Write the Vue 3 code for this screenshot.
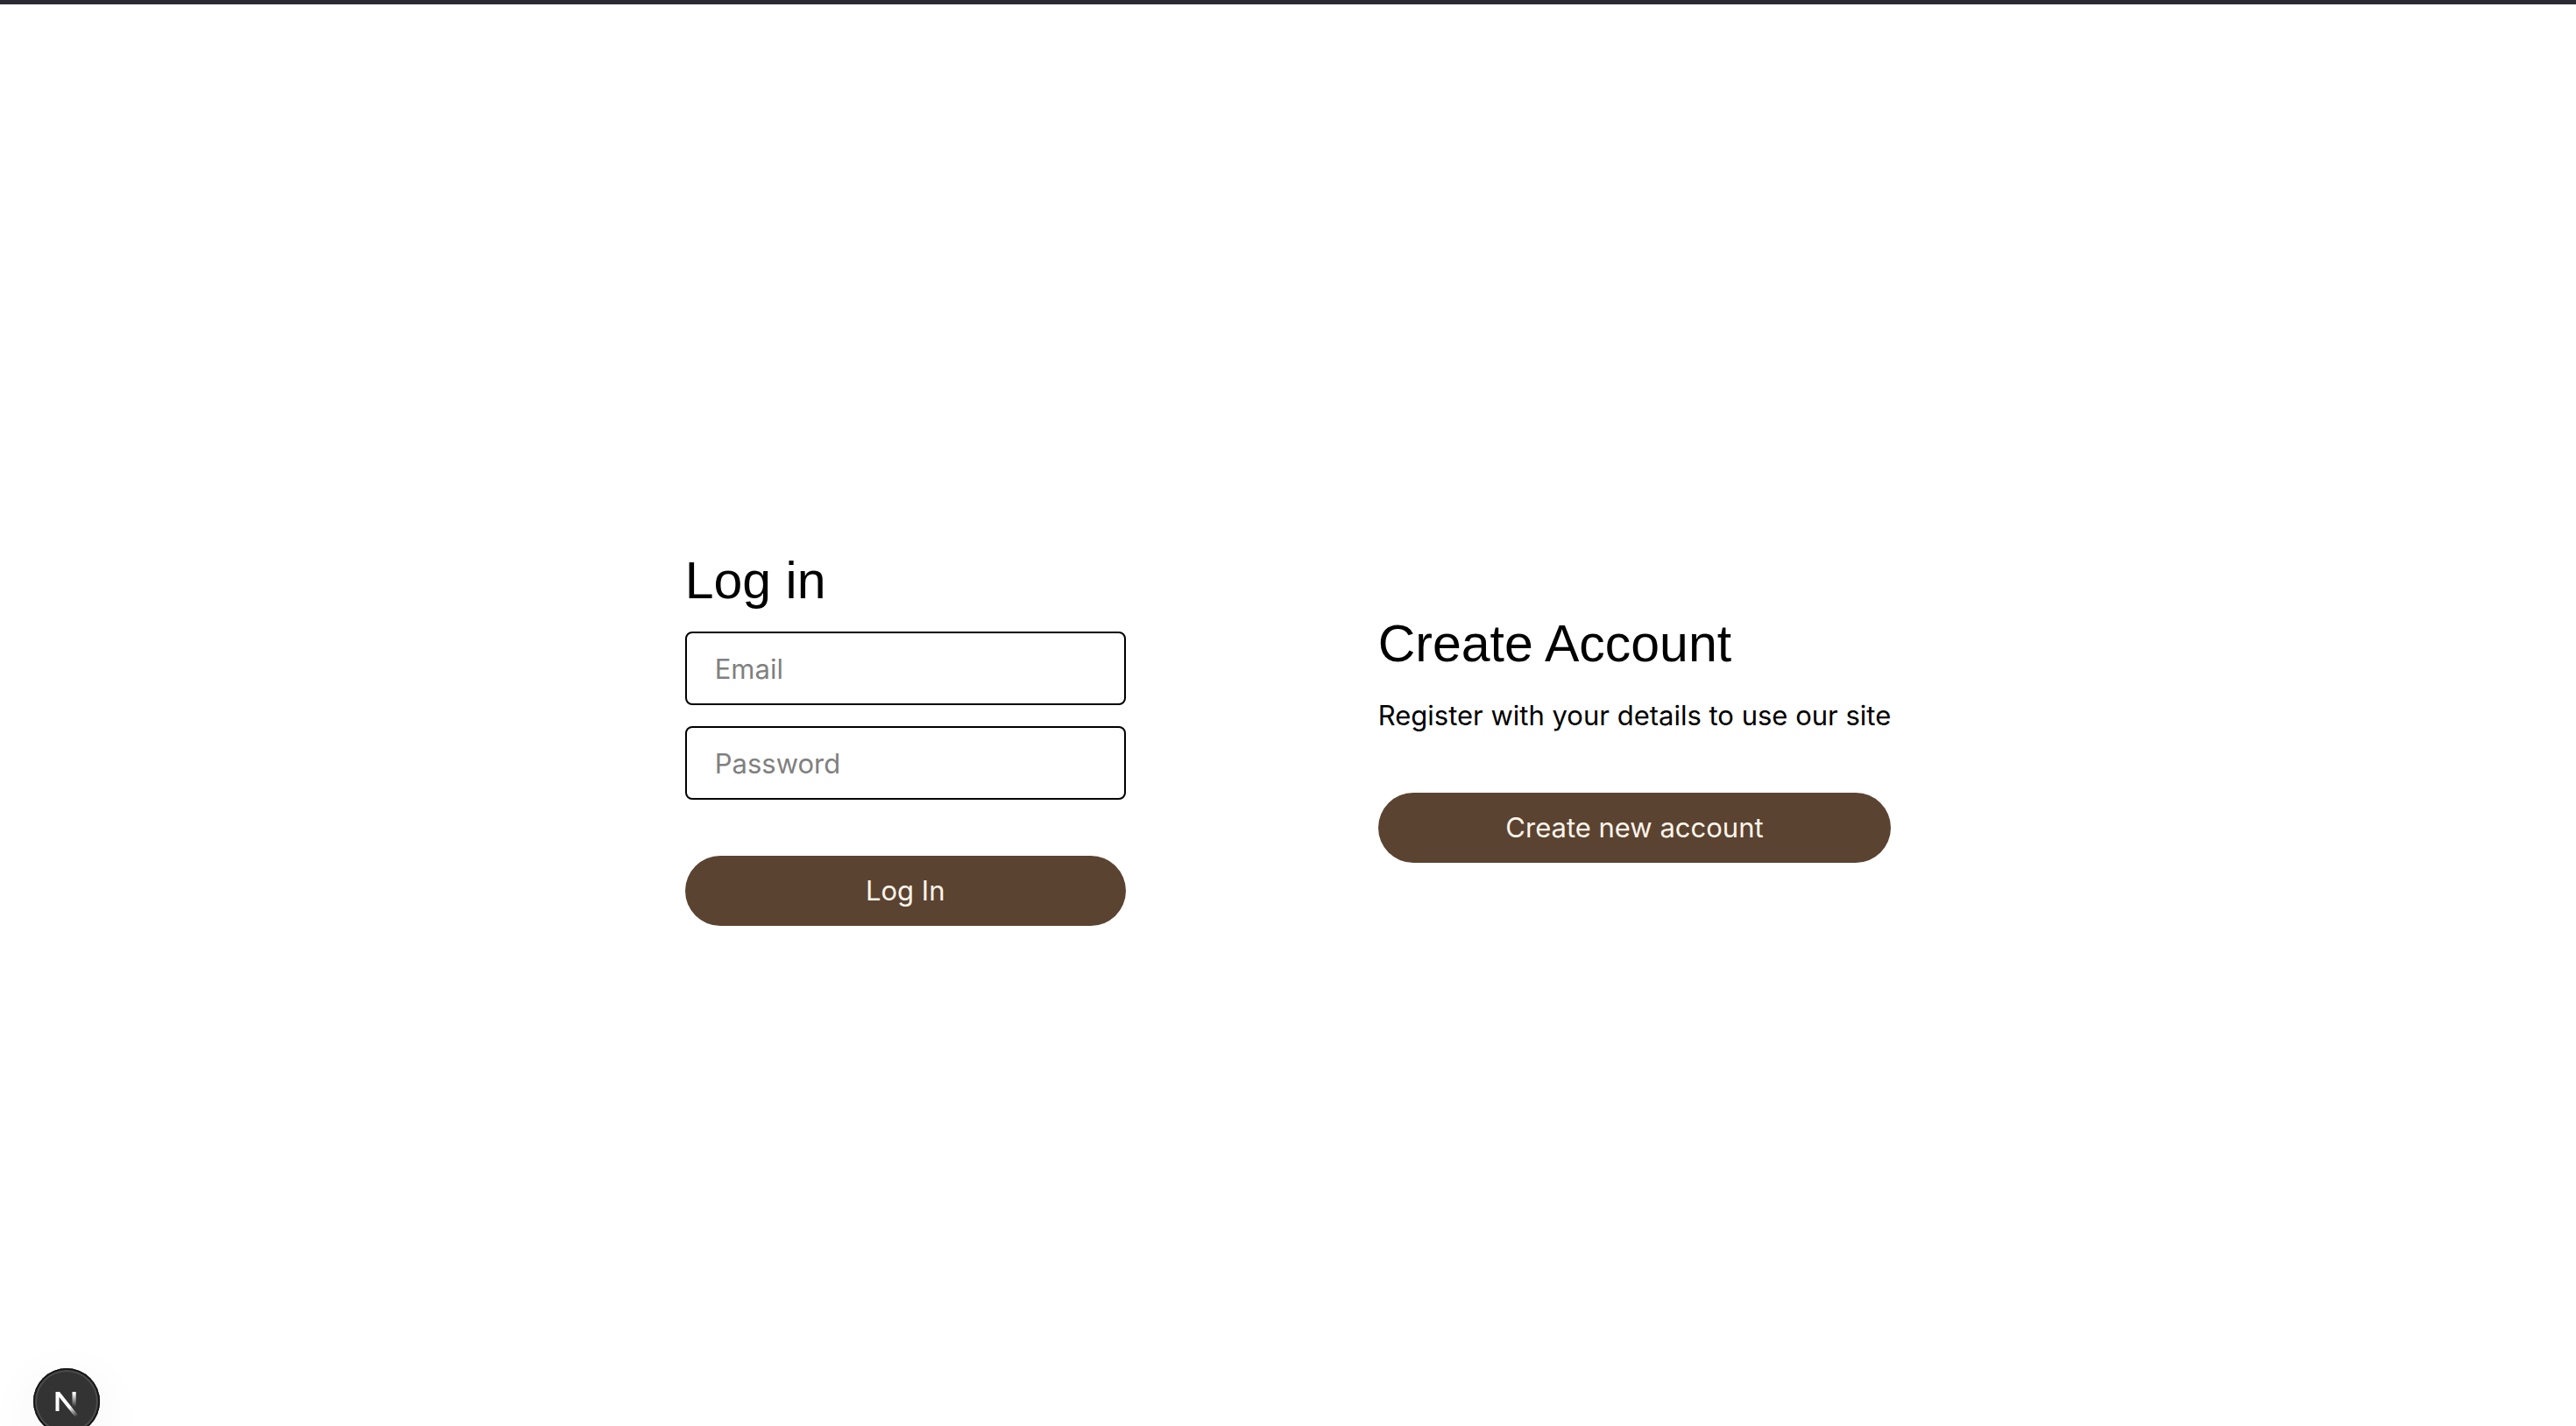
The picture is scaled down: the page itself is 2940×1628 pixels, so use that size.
<script setup>
import { ref } from 'vue'

const email = ref('')
const password = ref('')
</script>

<template>
  <div class="page">
    <div class="top-bar"></div>
    <main class="content">
      <form class="panel login" @submit.prevent>
        <h1 class="title">Log in</h1>
        <div class="fields">
          <input v-model="email" class="field" type="email" placeholder="Email" aria-label="Email" />
          <input v-model="password" class="field" type="password" placeholder="Password" aria-label="Password" />
        </div>
        <button class="action" type="submit">Log In</button>
      </form>
      <section class="panel">
        <h2 class="title">Create Account</h2>
        <p class="note">Register with your details to use our site</p>
        <button class="action" type="button">Create new account</button>
      </section>
    </main>
    <button class="dev-badge" type="button" aria-label="Open Next.js Dev Tools">
      <svg width="76" height="76" viewBox="0 0 76 76" fill="none" aria-hidden="true">
        <defs>
          <linearGradient id="diagonal" gradientUnits="userSpaceOnUse" x1="41" y1="43" x2="50" y2="55">
            <stop offset="0.1" stop-color="#fff" />
            <stop offset="1" stop-color="#fff" stop-opacity="0" />
          </linearGradient>
          <linearGradient id="stem" gradientUnits="userSpaceOnUse" x1="47" y1="27" x2="47" y2="44">
            <stop offset="0.1" stop-color="#fff" />
            <stop offset="1" stop-color="#fff" stop-opacity="0" />
          </linearGradient>
        </defs>
        <path d="M25.500 27H30L51 53.500L47.500 55.500L29.500 33V49H25.500Z" fill="url(#diagonal)" />
        <path d="M44.500 27H48.700V44H44.500Z" fill="url(#stem)" />
      </svg>
    </button>
  </div>
</template>

<style>
body {
  margin: 0;
  background: #fff;
}
</style>

<style scoped>
.page {
  display: flex;
  flex-direction: column;
  box-sizing: border-box;
  min-height: 100vh;
  color: #000;
  font-family: Inter, "Liberation Sans", sans-serif;
  font-size: 31px;
  line-height: 48px;
}

.top-bar {
  height: 5px;
  background: #2b2a33;
}

.content {
  display: flex;
  flex: 1;
  align-items: center;
  justify-content: center;
  gap: 288px;
  padding-top: 49px;
}

.panel {
  display: flex;
  flex-direction: column;
}

.login {
  width: 503px;
}

.title {
  margin: 0 0 20px;
  font-family: "Liberation Sans", Arial, sans-serif;
  font-size: 59px;
  font-weight: 400;
  line-height: 76px;
}

.fields {
  display: flex;
  flex-direction: column;
  gap: 24px;
}

.field {
  box-sizing: border-box;
  width: 100%;
  height: 84px;
  padding: 0 32px;
  border: 2px solid #000;
  border-radius: 8px;
  background: #fff;
  color: #000;
  font: inherit;
}

.field::placeholder {
  color: #808080;
  opacity: 1;
}

.note {
  margin: 0;
}

.action {
  height: 80px;
  margin-top: 64px;
  padding: 0 32px;
  border: 0;
  border-radius: 40px;
  background: #5b4331;
  color: #fff5eb;
  font: inherit;
  cursor: pointer;
}

.dev-badge {
  position: fixed;
  bottom: -10px;
  left: 38px;
  width: 76px;
  height: 76px;
  padding: 0;
  border: 0;
  border-radius: 50%;
  background: #333;
  box-shadow:
    inset 0 0 0 2px #171717,
    inset 0 0 0 4px #4c4c4c,
    0 16px 64px rgba(0, 0, 0, 0.06);
}

.dev-badge svg {
  display: block;
}
</style>
